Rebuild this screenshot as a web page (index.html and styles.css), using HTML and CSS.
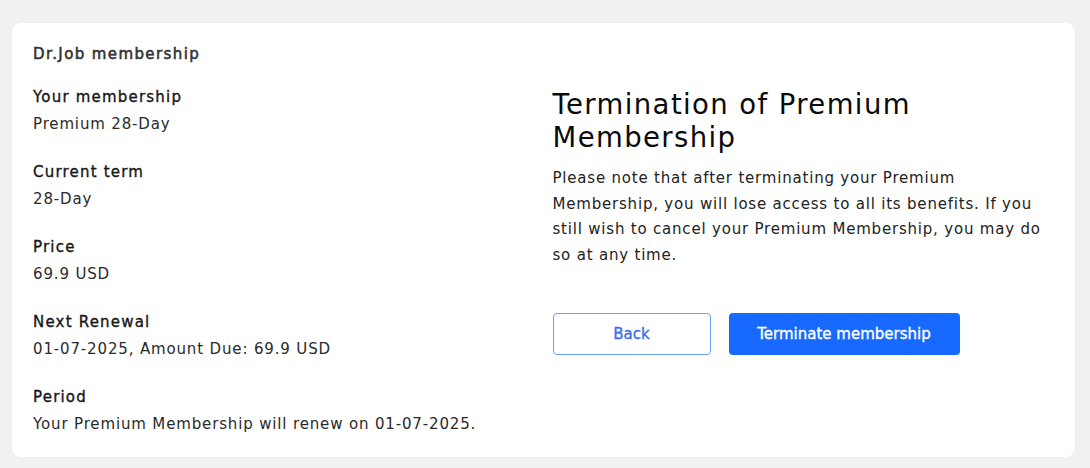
FILE: index.html
```html
<!DOCTYPE html>
<html lang="en">
<head>
<meta charset="utf-8">
<title>Dr.Job membership</title>
<link rel="stylesheet" href="styles.css">
</head>
<body>
<div class="page">
  <section class="card">
    <div class="details">
      <h2 class="card-title">Dr.Job membership</h2>
      <div class="group">
        <div class="label">Your membership</div>
        <div class="value">Premium 28-Day</div>
      </div>
      <div class="group">
        <div class="label">Current term</div>
        <div class="value">28-Day</div>
      </div>
      <div class="group">
        <div class="label">Price</div>
        <div class="value">69.9 USD</div>
      </div>
      <div class="group">
        <div class="label">Next Renewal</div>
        <div class="value">01-07-2025, Amount Due: 69.9 USD</div>
      </div>
      <div class="group">
        <div class="label">Period</div>
        <div class="value">Your Premium Membership will renew on 01-07-2025.</div>
      </div>
    </div>
    <div class="termination">
      <h1 class="term-title">Termination of Premium Membership</h1>
      <p class="term-text">Please note that after terminating your Premium Membership, you will lose access to all its benefits. If you still wish to cancel your Premium Membership, you may do so at any time.</p>
      <div class="actions">
        <button class="btn btn-outline">Back</button>
        <button class="btn btn-primary">Terminate membership</button>
      </div>
    </div>
  </section>
</div>
</body>
</html>
```
FILE: styles.css
```css
* { box-sizing: border-box; }
html, body { margin: 0; padding: 0; }
body {
  background: #f1f1f1;
  font-family: "DejaVu Sans", "Inter", sans-serif;
  color: #222;
  width: 1090px;
  height: 468px;
  overflow: hidden;
}
.page { padding: 23px 15px 0 12px; }
.card {
  background: #fff;
  border-radius: 9px;
  padding: 18px 21px 19px;
  display: grid;
  grid-template-columns: 1fr 1fr;
  column-gap: 18px;
  width: 1063px;
}
.details { display: flex; flex-direction: column; }
.card-title {
  margin: 0 0 16px;
  font-size: 15px;
  line-height: 27px;
  font-weight: 400;
  -webkit-text-stroke: 0.55px currentColor;
  letter-spacing: 1.4px;
  color: #333;
}
.group { margin-bottom: 21px; }
.group:last-child { margin-bottom: 0; }
.label {
  font-size: 15px;
  line-height: 27px;
  font-weight: 400;
  -webkit-text-stroke: 0.35px currentColor;
  letter-spacing: 1.2px;
  color: #161616;
}
.value {
  font-size: 15px;
  line-height: 27px;
  font-weight: 400;
  letter-spacing: 0.85px;
  color: #2a2a2a;
}
.termination { padding-top: 47px; }
.term-title {
  margin: 0 0 12px;
  font-size: 27.5px;
  line-height: 33px;
  font-weight: 400;
  letter-spacing: 1.4px;
  color: #0a0a0a;
}
.term-text {
  margin: 0;
  font-size: 15px;
  line-height: 25.5px;
  letter-spacing: 0.8px;
  color: #222;
}
.actions { display: flex; gap: 18px; margin-top: 45px; }
.btn {
  height: 42px;
  border-radius: 4px;
  font-family: inherit;
  font-size: 15px;
  font-weight: 400;
  -webkit-text-stroke: 0.35px currentColor;
  cursor: pointer;
}
.btn-outline {
  width: 158px;
  background: #fff;
  border: 1.5px solid #66a0f8;
  color: #3b6ef0;
}
.btn-primary {
  width: 231px;
  background: #1769ff;
  border: none;
  color: #fff;
}
```
